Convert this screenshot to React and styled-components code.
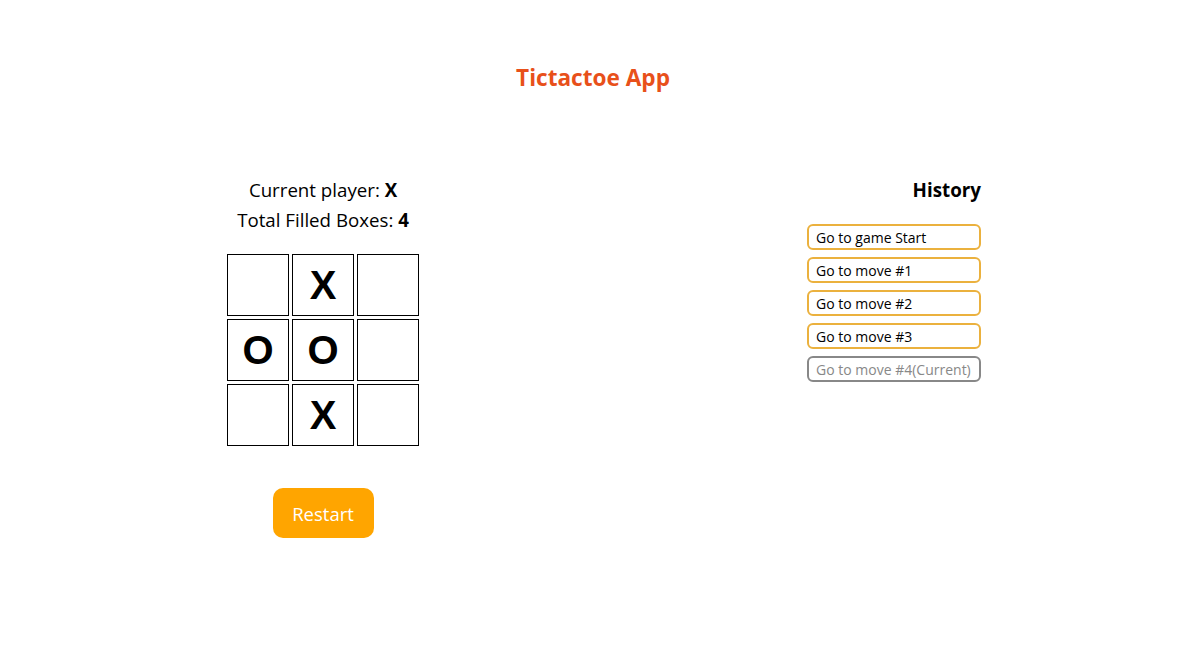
import React from "react";
import styled, { createGlobalStyle } from "styled-components";

const Global = createGlobalStyle`
  html, body { margin: 0; padding: 0; background: #fff; }
  body { font-family: "Open Sans", "Noto Sans", sans-serif; color: #000; }
`;

const Page = styled.div`
  width: 1186px;
  min-height: 648px;
  display: flex;
  flex-direction: column;
`;

const Title = styled.h1`
  margin: 62px 0 0;
  text-align: center;
  font-size: 22.6px;
  font-weight: 700;
  color: #e8501a;
  line-height: 32px;
`;

const Main = styled.div`
  display: flex;
  justify-content: space-between;
  align-items: flex-start;
  padding: 81px 205px 0 227px;
`;

const GameCol = styled.div`
  display: flex;
  flex-direction: column;
  align-items: center;
  width: 192px;
`;

const Info = styled.div`
  font-size: 18.7px;
  line-height: 30px;
  white-space: nowrap;
  b { font-weight: 700; }
`;

const Board = styled.div`
  display: grid;
  grid-template-columns: repeat(3, 62px);
  grid-auto-rows: 62px;
  gap: 3px;
  margin-top: 19px;
`;

const Cell = styled.button`
  box-sizing: border-box;
  border: 1px solid #000;
  background: #fff;
  padding: 0;
  font-family: "Liberation Sans", Arial, sans-serif;
  font-weight: 700;
  font-size: 40px;
  color: #000;
  display: flex;
  align-items: center;
  justify-content: center;
`;

const Restart = styled.button`
  margin-top: 42px;
  width: 101px;
  height: 50px;
  border: none;
  border-radius: 10px;
  background: #ffa500;
  color: #fff;
  font-family: inherit;
  font-size: 18.5px;
`;

const HistoryCol = styled.div`
  display: flex;
  flex-direction: column;
  align-items: flex-end;
  width: 174px;
`;

const HistoryTitle = styled.h2`
  margin: 3px 0 0;
  font-size: 18.8px;
  font-weight: 700;
  line-height: 24px;
`;

const MoveList = styled.div`
  display: flex;
  flex-direction: column;
  gap: 7px;
  margin-top: 22px;
  width: 174px;
`;

const MoveButton = styled.button`
  box-sizing: border-box;
  width: 174px;
  height: 26px;
  border: 2px solid ${(p) => (p.$current ? "#888888" : "#ebb13e")};
  border-radius: 6px;
  background: #fff;
  color: ${(p) => (p.$current ? "#888888" : "#000")};
  font-family: inherit;
  font-size: 14px;
  text-align: left;
  padding: 0 0 0 7px;
  white-space: nowrap;
`;

const board = ["", "X", "", "O", "O", "", "", "X", ""];
const moves = ["Go to game Start", "Go to move #1", "Go to move #2", "Go to move #3"];

export default function App() {
  return (
    <Page>
      <Global />
      <Title>Tictactoe App</Title>
      <Main>
        <GameCol>
          <Info>
            Current player: <b>X</b>
          </Info>
          <Info>
            Total Filled Boxes: <b>4</b>
          </Info>
          <Board>
            {board.map((v, i) => (
              <Cell key={i}>{v}</Cell>
            ))}
          </Board>
          <Restart>Restart</Restart>
        </GameCol>
        <HistoryCol>
          <HistoryTitle>History</HistoryTitle>
          <MoveList>
            {moves.map((m) => (
              <MoveButton key={m}>{m}</MoveButton>
            ))}
            <MoveButton $current>Go to move #4(Current)</MoveButton>
          </MoveList>
        </HistoryCol>
      </Main>
    </Page>
  );
}
